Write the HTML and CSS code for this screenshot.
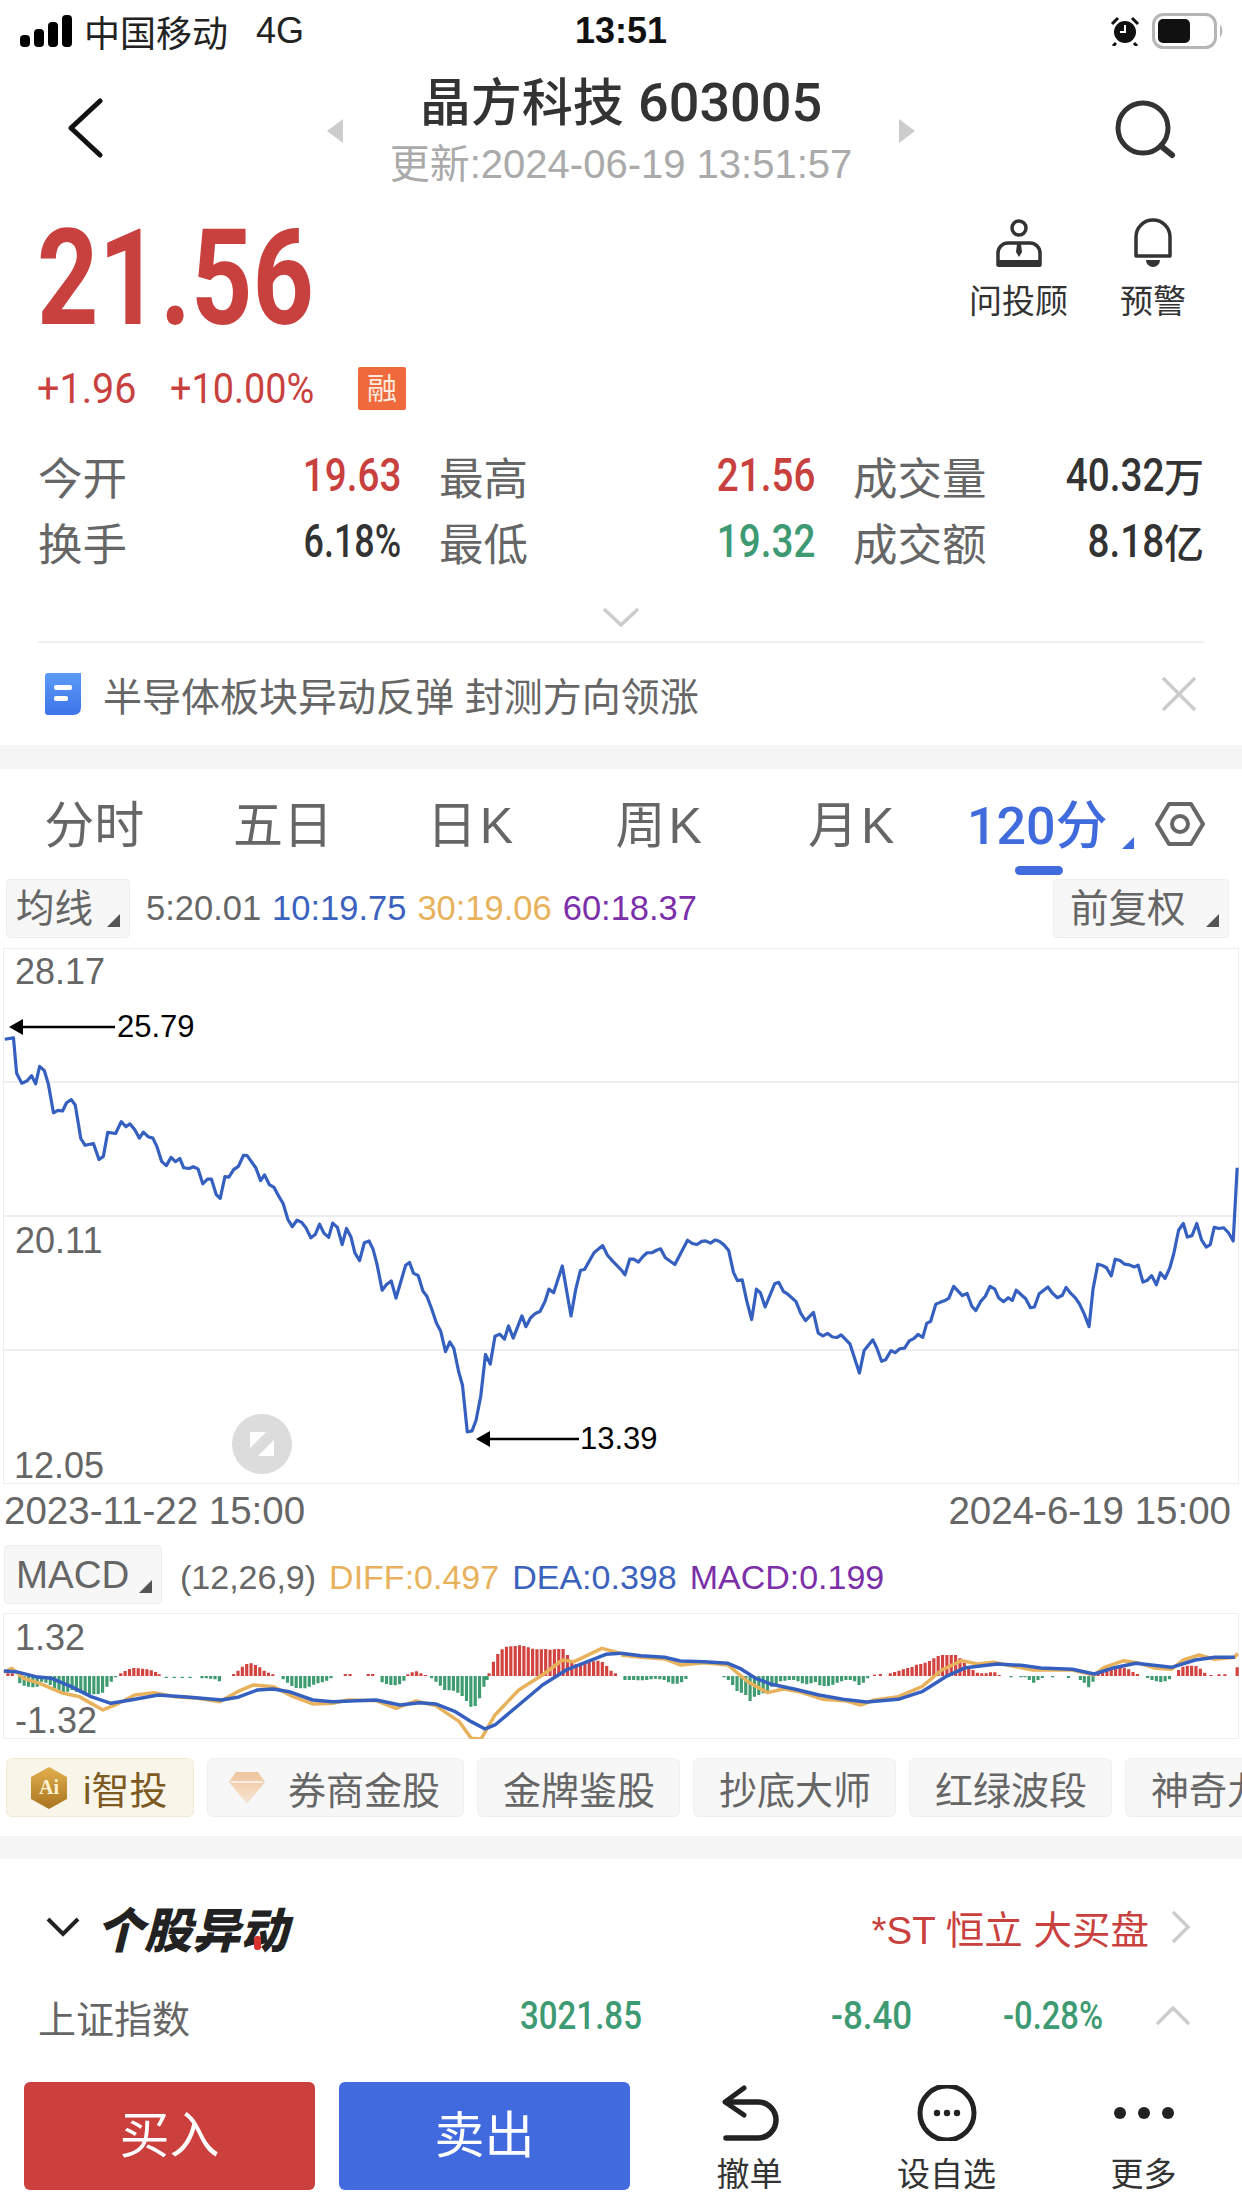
FILE: index.html
```html
<!DOCTYPE html>
<html>
<head>
  <meta charset="utf-8">
  <title>晶方科技 603005</title>
  <link rel="stylesheet" href="styles.css">
</head>
<body>
  <div class="status-bar">
    <div class="status-left">
      <svg class="signal" width="52" height="32" viewBox="0 0 52 32">
        <rect x="0" y="20" width="10" height="12" rx="4" />
        <rect x="14" y="14" width="10" height="18" rx="4" />
        <rect x="28" y="7" width="10" height="25" rx="4" />
        <rect x="42" y="0" width="10" height="32" rx="4" />
      </svg>
      <span class="carrier">中国移动</span>
      <span class="network">4G</span>
    </div>
    <div class="status-time">13:51</div>
    <div class="status-right">
      <svg width="30" height="30" viewBox="0 0 30 30">
        <circle cx="15" cy="16" r="11" fill="#111" />
        <path d="M15 9v7h-5" fill="none" stroke="#fff" stroke-width="2" />
        <path d="M2 8l6-6M28 8l-6-6M6 27l-3 3M24 27l3 3" stroke="#111" stroke-width="3" />
      </svg>
      <svg width="72" height="36" viewBox="0 0 72 36">
        <rect x="1.5" y="1.5" width="62" height="33" rx="10" fill="none" stroke="#b5b5b5" stroke-width="3" />
        <rect x="6" y="6" width="32" height="24" rx="5" fill="#111" />
        <path d="M68 12c3 1 3 11 0 12z" fill="#b5b5b5" />
      </svg>
    </div>
  </div>

  <div class="nav">
    <svg class="nav-back" width="36" height="60" viewBox="0 0 36 60">
      <path d="M32 3L3 30l29 27" fill="none" stroke="#111" stroke-width="5" stroke-linecap="round" stroke-linejoin="round" />
    </svg>
    <div class="nav-center">
      <div class="nav-arrow nav-arrow-left"></div>
      <div>
        <div class="nav-title">晶方科技 <span class="nav-code">603005</span></div>
        <div class="nav-sub">更新:2024-06-19 13:51:57</div>
      </div>
      <div class="nav-arrow nav-arrow-right"></div>
    </div>
    <svg class="nav-search" width="64" height="60" viewBox="0 0 64 60">
      <circle cx="29" cy="29" r="25" fill="none" stroke="#333" stroke-width="5" />
      <path d="M47 47l11 9" stroke="#333" stroke-width="6" stroke-linecap="round" />
    </svg>
  </div>

  <div class="quote">
    <div>
      <div class="price"><span class="num">21.56</span></div>
      <div class="change">
        <span class="change-abs"><span class="num">+1.96</span></span>
        <span class="change-pct"><span class="num">+10.00%</span></span>
        <span class="badge">融</span>
      </div>
    </div>
    <div class="quote-actions">
      <div class="action">
        <svg width="48" height="50" viewBox="0 0 48 50">
          <circle cx="24" cy="10" r="7" fill="none" stroke="#333" stroke-width="3.5" />
          <path d="M3 47V35a10 10 0 0 1 10-10h22a10 10 0 0 1 10 10v12z" fill="none" stroke="#333" stroke-width="3.5" stroke-linejoin="round" />
          <rect x="2" y="42" width="44" height="7" rx="2" fill="#333" />
          <path d="M22 26h4l1 8-3 5-3-5z" fill="#333" />
        </svg>
        <span>问投顾</span>
      </div>
      <div class="action">
        <svg width="40" height="50" viewBox="0 0 40 50">
          <path d="M3 38V19a17 17 0 0 1 34 0v19z" fill="none" stroke="#333" stroke-width="3.5" stroke-linejoin="round" />
          <path d="M13 42h14a7 7 0 0 1-14 0z" fill="#333" />
        </svg>
        <span>预警</span>
      </div>
    </div>
  </div>

  <div class="stats">
    <div class="stat"><span class="stat-label">今开</span><span class="stat-val"><span class="num red">19.63</span></span></div>
    <div class="stat"><span class="stat-label">最高</span><span class="stat-val"><span class="num red">21.56</span></span></div>
    <div class="stat"><span class="stat-label">成交量</span><span class="stat-val"><span class="num">40.32</span><i>万</i></span></div>
    <div class="stat"><span class="stat-label">换手</span><span class="stat-val stat-pct"><span class="num">6.18%</span></span></div>
    <div class="stat"><span class="stat-label">最低</span><span class="stat-val"><span class="num green">19.32</span></span></div>
    <div class="stat"><span class="stat-label">成交额</span><span class="stat-val"><span class="num">8.18</span><i>亿</i></span></div>
  </div>

  <div class="expand">
    <svg width="38" height="20" viewBox="0 0 38 20">
      <path d="M2 2l17 16L36 2" fill="none" stroke="#ccc" stroke-width="3.5" />
    </svg>
  </div>

  <div class="news">
    <svg width="36" height="42" viewBox="0 0 36 42">
      <defs>
        <linearGradient id="newsBlue" x1="0" y1="0" x2="0" y2="1">
          <stop offset="0" stop-color="#5b9bf5" />
          <stop offset="1" stop-color="#3d74ea" />
        </linearGradient>
      </defs>
      <path d="M3 0h33v34q0 8-8 8H3q-3 0-3-3V3q0-3 3-3z" fill="url(#newsBlue)" />
      <rect x="9" y="12" width="18" height="5" rx="2" fill="#fff" />
      <rect x="9" y="23" width="14" height="5" rx="2" fill="#fff" />
    </svg>
    <span class="news-text">半导体板块异动反弹 封测方向领涨</span>
    <svg class="news-close" width="36" height="36" viewBox="0 0 36 36">
      <path d="M2 2l32 32M34 2L2 34" stroke="#ccc" stroke-width="3.5" />
    </svg>
  </div>

  <div class="band"></div>

  <div class="tabs">
    <div class="tab">分时</div>
    <div class="tab">五日</div>
    <div class="tab tab-k">日K</div>
    <div class="tab tab-k">周K</div>
    <div class="tab tab-k tab-month">月K</div>
    <div class="tab tab-active">120分</div>
    <svg class="tab-gear" width="50" height="46" viewBox="0 0 50 46">
      <path d="M14 3h22l12 20-12 20H14L2 23z" fill="none" stroke="#666" stroke-width="4" stroke-linejoin="round" />
      <circle cx="25" cy="23" r="8" fill="none" stroke="#666" stroke-width="4" />
    </svg>
  </div>

  <div class="ma-row">
    <div class="select select-ma">均线</div>
    <div class="ma-values">
      <span class="gray">5:20.01</span>
      <span class="blue">10:19.75</span>
      <span class="orange">30:19.06</span>
      <span class="purple">60:18.37</span>
    </div>
    <div class="select select-fq">前复权</div>
  </div>

  <div class="chart">
    <svg class="chart-svg" width="1242" height="536" viewBox="0 0 1242 536">
      <rect x="3.5" y="0.5" width="1235" height="535" fill="none" stroke="#eee" />
      <path d="M3 134H1238M3 268H1238M3 402H1238" stroke="#eee" stroke-width="2" />
      <g class="price-line">
        <polyline transform="translate(0,2) scale(.396,.357)" points="12,250 34,246 42,345 55,373 68,367 80,352 90,375 100,326 112,338 122,375 135,456 146,449 158,451 168,428 180,419 190,434 204,528 215,547 236,542 250,587 261,578 272,511 292,514 306,481 318,495 328,487 340,503 352,527 362,510 374,523 386,527 396,550 408,592 420,604 432,581 443,593 454,584 464,610 478,612 488,607 500,613 512,655 524,642 534,642 546,685 556,696 568,635 578,636 590,615 602,606 615,575 624,576 646,610 658,646 668,630 680,657 692,665 704,690 715,710 727,755 738,775 750,757 762,763 772,777 785,806 796,797 807,768 818,793 830,805 840,765 852,777 864,825 875,780 886,803 896,848 908,870 920,820 932,815 942,838 952,880 965,953 976,937 988,927 1000,975 1012,930 1024,884 1034,875 1044,905 1056,912 1068,955 1078,970 1090,1005 1102,1045 1113,1068 1125,1125 1136,1098 1146,1116 1158,1180 1168,1220 1180,1350 1192,1347 1202,1318 1214,1250 1226,1133 1238,1160 1250,1082 1262,1076 1274,1090 1284,1053 1296,1087 1318,1025 1328,1055 1340,1030 1352,1018 1364,1012 1376,985 1386,950 1398,960 1420,885 1442,1025 1454,950 1466,897 1476,895 1500,848 1522,828 1534,855 1546,870 1568,895" />
        <polyline transform="translate(621,2) scale(.396,.357)" points="0,895 10,910 22,866 32,866 44,874 56,858 66,848 78,848 90,841 100,837 112,862 136,881 168,813 180,822 192,825 204,816 214,815 226,821 238,812 248,816 260,826 272,842 284,903 294,926 306,924 318,985 330,1035 342,950 352,960 364,1000 388,935 398,931 410,956 420,963 442,985 454,1018 466,1038 486,1015 498,1073 510,1081 522,1074 534,1084 546,1085 556,1078 578,1103 602,1185 614,1122 636,1092 646,1115 658,1152 668,1148 682,1122 692,1128 704,1117 716,1115 728,1095 740,1088 750,1077 762,1085 772,1046 782,1040 795,992 806,987 818,982 828,975 840,942 862,968 874,962 886,998 896,1010 908,985 920,970 932,942 944,950 954,975 966,985 978,974 988,982 998,953 1010,965 1022,977 1034,1002 1044,1000 1056,963 1078,944 1090,962 1102,974 1114,968 1124,945 1136,962 1148,975 1158,992 1170,1020 1182,1055 1192,950 1204,880 1216,884 1226,890 1238,913 1248,866 1260,870 1272,880 1284,882 1296,888 1306,883 1318,930 1328,926 1340,912 1352,938 1362,904 1374,920 1386,890 1396,850 1408,785 1420,766 1430,804 1442,800 1454,766 1466,812 1478,832 1488,825 1498,777 1510,780 1522,778 1534,792 1546,815 1556,610" />
      </g>
      <path d="M9 79l14-8v16zM476 491l14-8v16z" fill="#000" />
      <path d="M20 79H115M487 491H579" stroke="#000" stroke-width="2.5" />
      <circle cx="262" cy="496" r="30" fill="#dcdcdc" />
      <path d="M250 484h16l-16 16zM274 508h-16l16-16z" fill="#fff" />
    </svg>
    <span class="axis axis-top">28.17</span>
    <span class="axis axis-mid">20.11</span>
    <span class="axis axis-low">12.05</span>
    <span class="mark mark-high">25.79</span>
    <span class="mark mark-low">13.39</span>
  </div>

  <div class="dates">
    <span>2023-11-22 15:00</span>
    <span>2024-6-19 15:00</span>
  </div>

  <div class="macd-row">
    <div class="select select-macd">MACD</div>
    <div class="macd-values">
      <span class="gray">(12,26,9)</span>
      <span class="orange">DIFF:0.497</span>
      <span class="blue">DEA:0.398</span>
      <span class="purple">MACD:0.199</span>
    </div>
  </div>

  <div class="macd-chart">
    <svg class="chart-svg" width="1242" height="126" viewBox="0 0 1242 126">
      <rect x="3.5" y="0.5" width="1235" height="125" fill="none" stroke="#eee" />
      <g transform="translate(0,-73) scale(.396,.3333)" stroke-width="8" fill="none">
        <path stroke="#d2433f" d="M20 408V400M31 408V400M305 408V400M316 408V393M327 408V387M338 408V384M349 408V385M360 408V386M371 408V388M382 408V391M393 408V396M402 408V403M590 408V402M601 408V392M612 408V380M623 408V372M634 408V370M645 408V375M656 408V382M667 408V392M678 408V398M689 408V403M872 408V402M884 408V402M930 408V402M941 408V402M1030 408V403M1041 408V397M1052 408V394M1063 408V400M1074 408V405M1235 408V400M1246 408V365M1257 408V342M1268 408V328M1279 408V320M1290 408V319M1301 408V318M1312 408V316M1323 408V318M1334 408V322M1345 408V326M1356 408V328M1367 408V328M1378 408V327M1389 408V329M1400 408V328M1411 408V327M1422 408V327M1433 408V345M1444 408V368M1455 408V372M1466 408V370M1477 408V368M1488 408V366M1499 408V364M1510 408V362M1521 408V366M1532 408V378M1543 408V392M1554 408V400" />
        <path stroke="#3f9c70" d="M50 408V430M61 408V437M72 408V440M83 408V442M94 408V440M105 408V425M116 408V428M127 408V435M138 408V445M149 408V452M160 408V457M171 408V455M182 408V450M193 408V455M204 408V458M215 408V460M226 408V462M237 408V463M248 408V462M259 408V458M270 408V440M281 408V425M292 408V412M420 410V414M440 410V414M460 410V414M480 410V414M510 408V415M521 408V415M532 408V416M543 408V418M554 408V424M715 408V418M726 408V428M737 408V438M748 408V444M759 408V445M770 408V445M781 408V440M792 408V434M803 408V430M814 408V427M825 408V422M836 408V415M965 408V427M976 408V432M987 408V435M998 408V436M1009 408V433M1020 408V422M1090 408V415M1101 408V425M1112 408V437M1123 408V450M1134 408V451M1145 408V452M1156 408V458M1167 408V468M1178 408V483M1189 408V500M1200 408V498M1211 408V475M1222 408V440M1230 408V420" />
      </g>
      <g transform="translate(621,-73) scale(.396,.3333)" stroke-width="8" fill="none">
        <path stroke="#3f9c70" d="M10 408V420M21 408V420M32 408V420M43 408V421M54 408V421M65 408V420M76 408V418M87 408V416M98 408V418M109 408V420M120 408V427M131 408V431M142 408V431M153 408V427M164 408V417M260 408V412M271 408V420M282 408V435M293 408V453M304 408V458M315 408V465M326 408V483M337 408V470M348 408V465M359 408V460M370 408V455M381 408V440M392 408V432M403 408V424M414 408V422M425 408V420M436 408V420M447 408V424M458 408V430M469 408V433M480 408V430M491 408V426M502 408V436M513 408V438M524 408V438M535 408V434M546 408V428M557 408V424M568 408V420M579 408V420M590 408V424M601 408V435M612 408V428M623 408V415M985 408V412M1010 408V412M1020 408V412M1031 408V420M1042 408V428M1053 408V420M1064 408V414M1090 408V412M1130 408V414M1160 408V420M1170 408V428M1181 408V442M1192 408V425M1330 408V414M1341 408V420M1352 408V424M1363 408V426M1374 408V424M1385 408V418" />
        <path stroke="#d2433f" d="M640 408V404M655 408V402M680 408V400M691 408V396M702 408V392M713 408V388M724 408V384M735 408V381M746 408V374M757 408V372M768 408V368M779 408V363M790 408V355M801 408V348M812 408V345M823 408V345M834 408V345M845 408V345M856 408V355M867 408V368M878 408V378M889 408V390M900 408V398M911 408V400M922 408V400M933 408V397M944 408V397M955 408V405M1205 408V398M1216 408V390M1227 408V385M1238 408V383M1249 408V382M1260 408V380M1271 408V384M1282 408V388M1293 408V396M1304 408V402M1408 408V390M1419 408V380M1430 408V377M1441 408V377M1452 408V378M1463 408V386M1474 408V398M1490 408V405M1510 408V403M1525 408V403M1556 408V382" />
      </g>
      <g class="diff-line">
        <polyline transform="translate(0,-73) scale(.396,.3333)" points="10,397 30,385 60,415 100,430 160,460 200,470 260,510 300,490 340,465 390,458 440,470 500,475 555,485 600,455 640,435 690,440 740,470 790,492 840,490 880,480 950,482 1000,505 1050,483 1100,497 1160,545 1190,595 1215,597 1250,525 1310,450 1370,405 1420,360 1450,365 1520,325 1568,340" />
        <polyline transform="translate(621,-73) scale(.396,.3333)" points="0,345 50,352 110,357 150,375 210,368 270,375 320,425 370,458 410,447 450,455 510,478 570,483 605,495 640,480 700,470 760,440 810,390 860,362 900,372 940,367 1040,390 1140,390 1195,405 1220,382 1270,362 1310,370 1350,385 1390,388 1420,360 1460,345 1500,358 1550,352 1557,340" />
      </g>
      <g class="dea-line">
        <polyline transform="translate(0,-73) scale(.396,.3333)" points="10,393 40,395 90,410 130,415 180,440 230,470 280,490 330,480 400,465 480,472 560,480 600,472 650,450 690,447 730,455 790,480 840,485 900,482 950,480 1010,495 1060,488 1100,492 1150,515 1190,545 1225,567 1250,555 1310,495 1370,435 1430,390 1490,362 1530,343 1568,340" />
        <polyline transform="translate(621,-73) scale(.396,.3333)" points="0,340 50,347 110,352 150,363 210,365 270,370 300,385 340,415 380,433 440,448 500,465 560,478 620,486 700,478 760,455 820,410 870,383 950,372 1010,376 1060,384 1140,388 1195,402 1240,385 1300,370 1390,382 1450,360 1500,352 1550,352" />
      </g>
    </svg>
    <span class="axis axis-macd-top">1.32</span>
    <span class="axis axis-macd-low">-1.32</span>
  </div>

  <div class="pills">
    <div class="pill pill-gold">
      <svg width="40" height="44" viewBox="0 0 40 44">
        <defs>
          <linearGradient id="aiGold" x1="0" y1="0" x2="0" y2="1">
            <stop offset="0" stop-color="#e2b04e" />
            <stop offset="1" stop-color="#a8731f" />
          </linearGradient>
        </defs>
        <path d="M20 1l18 10v22L20 43 2 33V11z" fill="url(#aiGold)" />
        <text x="20" y="28" class="ai-text">Ai</text>
      </svg>
      <span>i智投</span>
    </div>
    <div class="pill pill-diamond">
      <svg width="36" height="32" viewBox="0 0 36 32">
        <defs>
          <linearGradient id="gem" x1="0" y1="0" x2="0" y2="1">
            <stop offset="0" stop-color="#eec49c" />
            <stop offset="1" stop-color="#f8e6d4" />
          </linearGradient>
        </defs>
        <path d="M7 0h22l7 10-18 22L0 10z" fill="url(#gem)" />
        <path d="M2 10h32" stroke="#fbeee0" stroke-width="2" />
      </svg>
      <span>券商金股</span>
    </div>
    <div class="pill">金牌鉴股</div>
    <div class="pill">抄底大师</div>
    <div class="pill">红绿波段</div>
    <div class="pill">神奇九转</div>
  </div>

  <div class="band band-low"></div>

  <div class="section-head">
    <svg width="34" height="20" viewBox="0 0 34 20">
      <path d="M2 2l15 15L32 2" fill="none" stroke="#222" stroke-width="4" />
    </svg>
    <div class="section-title">个股异动<i class="title-dot"></i></div>
    <div class="section-link">*ST 恒立 大买盘</div>
    <svg width="20" height="34" viewBox="0 0 20 34">
      <path d="M2 2l15 15L2 32" fill="none" stroke="#ccc" stroke-width="3.5" />
    </svg>
  </div>

  <div class="index-row">
    <span class="index-name">上证指数</span>
    <span class="index-price"><span class="num green">3021.85</span></span>
    <span class="index-chg"><span class="num green">-8.40</span></span>
    <span class="index-pct"><span class="num green">-0.28%</span></span>
    <svg width="36" height="20" viewBox="0 0 36 20">
      <path d="M2 18L18 2l16 16" fill="none" stroke="#ccc" stroke-width="3.5" />
    </svg>
  </div>

  <div class="footer">
    <div class="trade trade-buy">买入</div>
    <div class="trade trade-sell">卖出</div>
    <div class="tools">
      <div class="tool">
        <svg width="60" height="56" viewBox="0 0 60 56">
          <path d="M24 3L5 17l19 13" fill="none" stroke="#222" stroke-width="5" stroke-linejoin="round" stroke-linecap="round" />
          <path d="M6 17h32a18 18 0 0 1 0 36H6" fill="none" stroke="#222" stroke-width="5.5" stroke-linecap="round" />
        </svg>
        <span>撤单</span>
      </div>
      <div class="tool">
        <svg width="60" height="56" viewBox="0 0 60 56">
          <circle cx="30" cy="28" r="27" fill="none" stroke="#222" stroke-width="5" />
          <circle cx="20" cy="28" r="3.2" fill="#222" />
          <circle cx="30" cy="28" r="3.2" fill="#222" />
          <circle cx="40" cy="28" r="3.2" fill="#222" />
        </svg>
        <span>设自选</span>
      </div>
      <div class="tool">
        <svg width="60" height="56" viewBox="0 0 60 56">
          <circle cx="6" cy="28" r="6" fill="#222" />
          <circle cx="30" cy="28" r="6" fill="#222" />
          <circle cx="54" cy="28" r="6" fill="#222" />
        </svg>
        <span>更多</span>
      </div>
    </div>
  </div>
</body>
</html>
```

FILE: styles.css
```css
:root {
  --red: #c9413e;
  --green: #3d9a72;
  --blue: #3f6bdc;
  --text: #333;
  --muted: #666;
}

html, body {
  margin: 0;
  padding: 0;
}

body {
  width: 1242px;
  height: 2208px;
  overflow: hidden;
  background-color: #fff;
  color: var(--text);
  font-family: "Liberation Sans", "Noto Sans CJK SC", sans-serif;
}

svg {
  display: block;
  flex: none;
}

i {
  font-style: normal;
}

/* the app's numerals are narrower than anything installed, so squeeze them */
.num {
  display: inline-block;
  font-family: Roboto, "Liberation Sans", sans-serif;
  transform: scaleX(var(--squeeze, 0.84));
  transform-origin: left center;
}

.red { color: var(--red); }
.green { color: var(--green); }
.gray { color: var(--muted); }
.blue { color: #3b62bd; }
.orange { color: #e8b25c; }
.purple { color: #7b2fa8; }

/* status bar */
.status-bar {
  display: flex;
  align-items: center;
  justify-content: space-between;
  height: 62px;
  padding: 0 18px 0 20px;
  position: relative;
}

.status-left {
  display: flex;
  align-items: center;
  color: #222;
  font-size: 36px;
}

.carrier {
  margin-left: 12px;
}

.network {
  margin-left: 28px;
  font-size: 36px;
}

.status-time {
  position: absolute;
  left: 0;
  right: 0;
  text-align: center;
  font-size: 36px;
  font-weight: bold;
  color: #111;
}

.status-right {
  display: flex;
  align-items: center;
  gap: 12px;
}

/* nav */
.nav {
  display: flex;
  align-items: flex-start;
  height: 133px;
  padding-top: 11px;
  box-sizing: border-box;
}

.nav-back {
  margin: 25px 0 0 68px;
}

.nav-center {
  flex: 1;
  display: flex;
  justify-content: center;
  align-items: center;
  gap: 47px;
  margin-left: 24px;
  text-align: center;
}

.nav-title {
  font-size: 51px;
  line-height: 60px;
  font-weight: 500;
  white-space: nowrap;
}

.nav-code {
  font-family: Roboto, sans-serif;
  font-size: 54px;
}

.nav-sub {
  font-size: 40px;
  line-height: 60px;
  color: #aaa;
  white-space: nowrap;
}

.nav-arrow {
  width: 0;
  height: 0;
  margin-bottom: 6px;
  border-top: 12px solid transparent;
  border-bottom: 12px solid transparent;
}

.nav-arrow-left { border-right: 16px solid #ccc; }
.nav-arrow-right { border-left: 16px solid #ccc; }

.nav-search {
  margin: 26px 64px 0 0;
}

/* quote */
.quote {
  display: flex;
  justify-content: space-between;
  height: 249px;
  padding: 18px 56px 0 37px;
  box-sizing: border-box;
}

.price {
  font-size: 134px;
  line-height: 130px;
  font-weight: bold;
  color: var(--red);
  --squeeze: 0.8;
}

.change {
  display: flex;
  align-items: center;
  margin-top: 19px;
  height: 50px;
  font-size: 43px;
  color: var(--red);
}

.change-abs {
  width: 133px;
  --squeeze: 0.92;
}

.change-pct {
  width: 188px;
  --squeeze: 0.88;
}

.badge {
  width: 48px;
  height: 43px;
  border-radius: 2px;
  background-color: #ee6a3c;
  color: #fde9df;
  font-size: 30px;
  line-height: 43px;
  text-align: center;
}

.quote-actions {
  display: flex;
  gap: 52px;
  padding-top: 5px;
}

.action {
  display: flex;
  flex-direction: column;
  align-items: center;
  gap: 14px;
  font-size: 33px;
  line-height: 40px;
  color: var(--text);
}

/* stats */
.stats {
  display: grid;
  grid-template-columns: 363px 376px 351px;
  column-gap: 38px;
  grid-auto-rows: 66px;
  padding: 0 38px;
  margin-top: -2px;
  margin-bottom: 2px;
}

.stat {
  display: flex;
  align-items: center;
  justify-content: space-between;
}

.stat-label {
  font-size: 44.5px;
  color: var(--muted);
}

.stat-val {
  display: flex;
  align-items: center;
  font-size: 46px;
  font-weight: 500;
}

.stat-pct {
  --squeeze: 0.78;
}

.stat-val .num {
  transform-origin: right center;
}

.stat-val i {
  font-family: "Noto Sans CJK SC", sans-serif;
  font-size: 40px;
  font-weight: 500;
}

.expand {
  display: flex;
  justify-content: center;
  height: 67px;
  margin: 0 38px;
  padding-top: 31px;
  box-sizing: border-box;
  border-bottom: 2px solid #f0f0f0;
}

/* news */
.news {
  display: flex;
  align-items: center;
  height: 102px;
  padding: 0 45px;
  box-sizing: border-box;
}

.news-text {
  flex: 1;
  margin-left: 22px;
  font-size: 39px;
  color: var(--muted);
}

.band {
  height: 24px;
  background-color: #f5f5f5;
}

.band-low {
  height: 23px;
  margin-top: 19px;
}

/* tabs */
.tabs {
  display: flex;
  align-items: center;
  height: 104px;
  box-sizing: border-box;
}

.tab {
  flex: 0 0 188.6px;
  position: relative;
  text-align: center;
  font-size: 50px;
  color: var(--muted);
}

.tab-k {
  letter-spacing: 3px;
}

.tab-month {
  padding-left: 8px;
  box-sizing: border-box;
}

.tab-active {
  font-family: Roboto, "Noto Sans CJK SC", sans-serif;
  font-size: 52px;
  font-weight: 500;
  color: var(--blue);
}

.tab-active::before {
  content: "";
  position: absolute;
  left: 72px;
  bottom: -16px;
  width: 48px;
  height: 9px;
  border-radius: 5px;
  background-color: var(--blue);
}

.tab-active::after {
  content: "";
  position: absolute;
  right: -2px;
  bottom: 10px;
  border-left: 12px solid transparent;
  border-bottom: 12px solid var(--blue);
}

.tab-gear {
  margin: 6px 0 0 23px;
}

/* selectors */
.select {
  position: relative;
  box-sizing: border-box;
  height: 59px;
  border: 1px solid #eee;
  border-radius: 4px;
  background-color: #f7f7f7;
  color: var(--muted);
  font-size: 38.5px;
  line-height: 57px;
}

.select::after {
  content: "";
  position: absolute;
  right: 9px;
  bottom: 10px;
  border-left: 13px solid transparent;
  border-bottom: 13px solid #555;
}

.ma-row {
  display: flex;
  align-items: center;
  height: 70px;
  padding: 0 13px 0 6px;
  box-sizing: border-box;
  font-size: 34.5px;
}

.select-ma {
  width: 124px;
  padding-left: 9px;
}

.ma-values {
  flex: 1;
  display: flex;
  gap: 11px;
  margin-left: 16px;
}

.select-fq {
  width: 176px;
  padding-left: 16px;
}

/* charts */
.chart {
  position: relative;
  height: 536px;
  margin-top: 5px;
}

.chart-svg {
  position: absolute;
  left: 0;
  top: 0;
}

.price-line polyline {
  fill: none;
  stroke: #3560c0;
  stroke-width: 3.2px;
  stroke-linejoin: round;
  vector-effect: non-scaling-stroke;
}

.axis {
  position: absolute;
  left: 15px;
  font-size: 36px;
  line-height: 36px;
  color: var(--muted);
}

.axis-top { top: 6px; }
.axis-mid { top: 275px; }
.axis-low { top: 500px; left: 14px; }

.mark {
  position: absolute;
  font-size: 31px;
  line-height: 32px;
  color: #000;
}

.mark-high { left: 117px; top: 63px; }
.mark-low { left: 580px; top: 475px; }

.dates {
  display: flex;
  justify-content: space-between;
  height: 54px;
  padding: 0 11px 0 4px;
  font-size: 38.5px;
  line-height: 54px;
  color: var(--muted);
}

.macd-row {
  display: flex;
  align-items: center;
  height: 72px;
  padding-left: 4px;
  font-size: 34px;
}

.select-macd {
  width: 158px;
  padding-left: 11px;
}

.macd-values {
  display: flex;
  gap: 13px;
  margin: 6px 0 0 18px;
}

.macd-chart {
  position: relative;
  height: 126px;
  margin-top: 3px;
}

.diff-line polyline,
.dea-line polyline {
  fill: none;
  stroke-width: 3.5px;
  stroke-linejoin: round;
  vector-effect: non-scaling-stroke;
}

.diff-line polyline { stroke: #e8b25c; }
.dea-line polyline { stroke: #3560c0; }

.axis-macd-top { top: 7px; }
.axis-macd-low { top: 90px; }

/* pills */
.pills {
  display: flex;
  gap: 13px;
  height: 59px;
  margin-top: 19px;
  padding-left: 6px;
  overflow: hidden;
}

.pill {
  flex: none;
  display: flex;
  align-items: center;
  box-sizing: border-box;
  width: 203px;
  height: 59px;
  padding: 0 25px;
  border: 1px solid #f0f0f0;
  border-radius: 6px;
  background-color: #f7f7f7;
  color: var(--muted);
  font-size: 38px;
  white-space: nowrap;
}

.pill-gold {
  width: 188px;
  padding: 0 0 0 22px;
  gap: 14px;
  border-color: #f2e9d6;
  background-color: #faf5e9;
  color: #7d5a1f;
}

.pill-diamond {
  width: 257px;
  padding-left: 21px;
  gap: 23px;
}

.ai-text {
  font-family: "Liberation Serif", serif;
  font-size: 20px;
  font-weight: bold;
  fill: #fff3d0;
  text-anchor: middle;
}

/* movers */
.section-head {
  display: flex;
  align-items: center;
  height: 136px;
  padding: 0 51px 0 46px;
  box-sizing: border-box;
}

.section-title {
  flex: 1;
  position: relative;
  margin-left: 16px;
  font-family: "Noto Sans CJK SC", sans-serif;
  font-size: 48px;
  font-weight: 900;
  font-style: italic;
  color: #222;
}

.title-dot {
  position: absolute;
  left: 158px;
  top: 44px;
  width: 7px;
  height: 14px;
  border-radius: 3px;
  background-color: #d8332c;
}

.section-link {
  margin-right: 22px;
  font-size: 38.5px;
  color: var(--red);
}

.index-row {
  display: flex;
  align-items: center;
  height: 42px;
  margin-bottom: 2px;
  padding: 0 51px 0 38px;
  font-size: 38px;
  white-space: nowrap;
}

.index-name {
  width: 483px;
  color: var(--muted);
}

.index-price,
.index-chg,
.index-pct {
  font-weight: 500;
}

.index-price { width: 311px; --squeeze: 0.87; }
.index-chg { width: 173px; --squeeze: 0.92; }
.index-pct { width: 152px; --squeeze: 0.86; }

/* footer */
.footer {
  display: flex;
  gap: 24px;
  padding: 43px 0 0 24px;
}

.trade {
  width: 291px;
  height: 108px;
  border-radius: 6px;
  color: #fff;
  font-size: 50px;
  line-height: 108px;
  text-align: center;
}

.trade-buy { background-color: #cb3f3c; }
.trade-sell { background-color: #426adf; }

.tools {
  flex: 1;
  display: flex;
  margin-left: -3px;
}

.tool {
  flex: 1;
  display: flex;
  flex-direction: column;
  align-items: center;
  gap: 12px;
  padding-top: 3px;
  font-size: 33px;
  line-height: 44px;
  color: var(--text);
}
```
